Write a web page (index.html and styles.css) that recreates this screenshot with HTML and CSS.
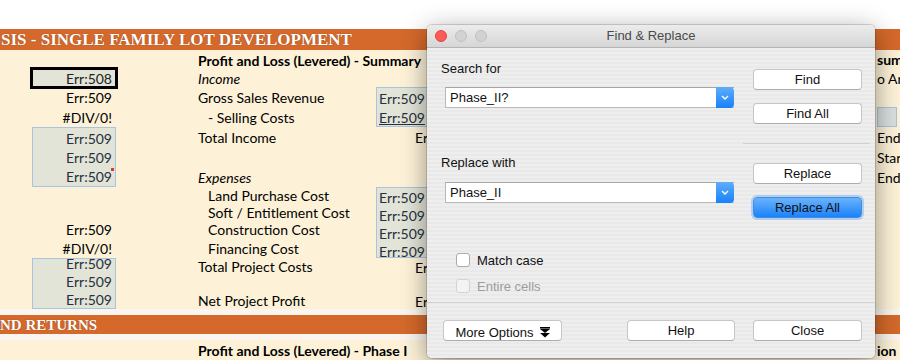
FILE: index.html
```html
<!DOCTYPE html>
<html lang="en">
<head>
    <meta charset="UTF-8">
    <title>Lot Development - Find &amp; Replace</title>
    <link rel="stylesheet" href="styles.css">
</head>
<body>
    <div class="sheet">
        <div class="band band-top"><span>SIS - SINGLE FAMILY LOT DEVELOPMENT</span></div>

        <div class="grid">
            <!-- column D: labels -->
            <div class="lbl bold" style="grid-row: 1">Profit and Loss (Levered) - Summary</div>
            <div class="lbl ital" style="grid-row: 2">Income</div>
            <div class="lbl" style="grid-row: 3">Gross Sales Revenue</div>
            <div class="lbl ind" style="grid-row: 4">- Selling Costs</div>
            <div class="lbl" style="grid-row: 5">Total Income</div>
            <div class="lbl ital" style="grid-row: 7">Expenses</div>
            <div class="lbl ind tight" style="grid-row: 8">Land Purchase Cost</div>
            <div class="lbl ind tight" style="grid-row: 9">Soft / Entitlement Cost</div>
            <div class="lbl ind tight" style="grid-row: 10">Construction Cost</div>
            <div class="lbl ind" style="grid-row: 11">Financing Cost</div>
            <div class="lbl tight" style="grid-row: 12">Total Project Costs</div>
            <div class="lbl tight" style="grid-row: 14">Net Project Profit</div>

            <!-- column B: values -->
            <div class="val selected" style="grid-row: 2">Err:508</div>
            <div class="val" style="grid-row: 3">Err:509</div>
            <div class="val" style="grid-row: 4">#DIV/0!</div>
            <div class="val box" style="grid-row: 5 / 8">
                <div>Err:509</div>
                <div>Err:509</div>
                <div class="has-note">Err:509<span class="note"></span></div>
            </div>
            <div class="val tight" style="grid-row: 10">Err:509</div>
            <div class="val" style="grid-row: 11">#DIV/0!</div>
            <div class="val box" style="grid-row: 12 / 15">
                <div>Err:509</div>
                <div>Err:509</div>
                <div>Err:509</div>
            </div>

            <!-- column E: values under the dialog -->
            <div class="rval box" style="grid-row: 3 / 5">
                <div>Err:509</div>
                <div><u>Err:509</u></div>
            </div>
            <div class="rval cut" style="grid-row: 5">Err:509</div>
            <div class="rval box" style="grid-row: 8 / 12">
                <div>Err:509</div>
                <div>Err:509</div>
                <div>Err:509</div>
                <div><u>Err:509</u></div>
            </div>
            <div class="rval cut" style="grid-row: 12">Err:509</div>
            <div class="rval cut" style="grid-row: 14">Err:509</div>

            <!-- column G: right edge -->
            <div class="far bold" style="grid-row: 1">sum</div>
            <div class="far" style="grid-row: 2">o Ar</div>
            <div class="far-box" style="grid-row: 4"></div>
            <div class="far" style="grid-row: 5">End I</div>
            <div class="far" style="grid-row: 6">Star</div>
            <div class="far" style="grid-row: 7">End</div>
        </div>

        <div class="stripe"></div>
        <div class="band band-mid"><span>ND RETURNS</span></div>
        <div class="stripe"></div>

        <div class="last-row">
            <div class="lbl bold">Profit and Loss (Levered) - Phase I</div>
            <div class="far bold">ion</div>
        </div>
    </div>

    <div class="dialog">
        <div class="titlebar">
            <div class="lights">
                <span class="light red"></span>
                <span class="light"></span>
                <span class="light"></span>
            </div>
            <div class="title">Find &amp; Replace</div>
        </div>

        <div class="dlg-body">
            <div class="section">
                <div class="fields">
                    <label>Search for</label>
                    <div class="combo">
                        <span class="combo-text">Phase_II?</span>
                        <span class="combo-btn"><svg width="8" height="5" viewBox="0 0 8 5"><polyline points="1,1 4,4 7,1" fill="none" stroke="#fff" stroke-width="1.4"/></svg></span>
                    </div>
                </div>
                <div class="buttons">
                    <div class="btn">Find</div>
                    <div class="btn">Find All</div>
                </div>
            </div>

            <div class="sep-right"></div>

            <div class="section second">
                <div class="fields">
                    <label>Replace with</label>
                    <div class="combo">
                        <span class="combo-text">Phase_II</span>
                        <span class="combo-btn"><svg width="8" height="5" viewBox="0 0 8 5"><polyline points="1,1 4,4 7,1" fill="none" stroke="#fff" stroke-width="1.4"/></svg></span>
                    </div>
                </div>
                <div class="buttons">
                    <div class="btn">Replace</div>
                    <div class="btn primary">Replace All</div>
                </div>
            </div>

            <div class="checks">
                <div class="check"><span class="box-ck"></span>Match case</div>
                <div class="check disabled"><span class="box-ck"></span>Entire cells</div>
            </div>

            <div class="footer">
                <div class="btn more">More Options <svg width="10" height="11" viewBox="0 0 10 11"><rect x="0" y="0" width="10" height="1.6" fill="#000"/><polygon points="0,2 10,2 5,6" fill="#000"/><polygon points="0,6 10,6 5,10.5" fill="#000"/></svg></div>
                <div class="btn help">Help</div>
                <div class="btn">Close</div>
            </div>
        </div>
    </div>
</body>
</html>
```

FILE: styles.css
```css
body {
    margin: 0;
    width: 900px;
    height: 360px;
    overflow: hidden;
    background: #fff;
    font-family: Lato, "Open Sans", sans-serif;
    position: relative;
}

/* spreadsheet behind the dialog */
.sheet {
    padding-top: 29px;
}
.band {
    background: #d4692b;
    color: #fff;
    font-family: "Liberation Serif", serif;
    font-weight: bold;
    font-size: 17px;
    white-space: nowrap;
    overflow: hidden;
    text-shadow: 0 0 1px #7a3410;
}
.band-top {
    height: 21px;
    line-height: 22px;
    padding-left: 1px;
}
.band-mid {
    height: 19px;
    line-height: 20px;
    font-size: 15px;
}
.stripe {
    height: 6px;
    background: #faf6ef;
}
.grid {
    display: grid;
    grid-template-columns: 32px 84px 82px 178px 51px 448px 25px;
    grid-template-rows: 19px 18px 20px 20px 20px 20px 20px 17px 17px 17px 20px 17px 17px 17px;
    background: #fdf2d8;
    font-size: 14px;
    color: #000;
}
.lbl {
    grid-column: 4;
    display: flex;
    align-items: center;
    white-space: nowrap;
    padding-top: 1px;
}
.tight {
    padding-top: 0;
    padding-bottom: 1px;
}
.bold {
    font-weight: bold;
}
.ital {
    font-style: italic;
}
.ind {
    padding-left: 10px;
}
.val {
    grid-column: 2;
    display: flex;
    align-items: center;
    justify-content: flex-end;
    padding-right: 4px;
    padding-top: 1px;
}
.val.tight {
    padding-top: 0;
}
.val.selected {
    background: #e2e4d7;
    outline: 3px solid #000;
    outline-offset: -1px;
    color: #222;
}
.box {
    background: #e2e4d7;
    border: 1px solid #a8c4de;
    color: #263040;
    display: flex;
    flex-direction: column;
    align-items: stretch;
    padding: 0;
}
.box > div {
    flex: 1;
    display: flex;
    align-items: center;
    padding-top: 1px;
}
.val.box > div {
    justify-content: flex-end;
    padding-right: 3px;
}
.has-note {
    position: relative;
}
.note {
    position: absolute;
    right: 1px;
    top: 1px;
    width: 3px;
    height: 3px;
    background: #e8352c;
}
.rval {
    grid-column: 5 / 7;
    white-space: nowrap;
    overflow: hidden;
}
.rval.box > div {
    padding-left: 2px;
}
.rval.cut {
    display: flex;
    align-items: center;
    padding-left: 39px;
    padding-top: 1px;
}
.far {
    grid-column: 7;
    display: flex;
    align-items: center;
    padding-left: 2px;
    white-space: nowrap;
    overflow: hidden;
}
.far-box {
    grid-column: 7;
    margin-left: 2px;
    margin-right: 3px;
    background: #d9dede;
    border: 1px solid #a8c4de;
}
.last-row {
    display: grid;
    grid-template-columns: 198px 677px 25px;
    height: 20px;
    background: #fdf2d8;
    font-size: 14px;
}
.last-row .lbl {
    grid-column: 2;
}
.last-row .far {
    grid-column: 3;
}

/* the find & replace window */
.dialog {
    position: absolute;
    left: 427px;
    top: 25px;
    width: 448px;
    border-radius: 5px;
    overflow: hidden;
    box-shadow: 0 0 0 1px rgba(0, 0, 0, 0.14), 0 6px 26px rgba(0, 0, 0, 0.42);
    font-family: "Liberation Sans", Arial, sans-serif;
    font-size: 13px;
    color: #111;
}
.titlebar {
    height: 22px;
    background: linear-gradient(#ececec, #d6d6d6);
    border-bottom: 1px solid #b4b4b4;
    display: flex;
    align-items: center;
    position: relative;
}
.lights {
    display: flex;
    gap: 8px;
    padding-left: 8px;
}
.light {
    width: 12px;
    height: 12px;
    border-radius: 50%;
    box-sizing: border-box;
    background: #d2d2d2;
    border: 1px solid #c0c0c0;
}
.light.red {
    background: #fc5b57;
    border-color: #e3443f;
}
.title {
    position: absolute;
    left: 0;
    right: 0;
    text-align: center;
    color: #4a4a4a;
    line-height: 22px;
}
.dlg-body {
    height: 310px;
    box-sizing: border-box;
    padding-top: 13px;
    background: repeating-linear-gradient(#eeeeee 0, #eeeeee 2px, #e9e9e9 2px, #e9e9e9 4px);
}
.section {
    display: flex;
    justify-content: space-between;
    padding-right: 13px;
}
.section.second {
    padding-top: 11px;
}
.fields {
    padding-left: 14px;
}
.fields label {
    display: block;
    line-height: 16px;
}
.combo {
    margin: 10px 0 0 4px;
    width: 289px;
    height: 21px;
    box-sizing: border-box;
    background: #fff;
    border: 1px solid #b9b9b9;
    border-top-color: #a6a6a6;
    border-right: none;
    display: flex;
    align-items: center;
}
.second .combo {
    margin-top: 11px;
}
.combo-text {
    flex: 1;
    padding-left: 4px;
    font-size: 13px;
}
.combo-btn {
    width: 18px;
    height: 21px;
    margin-top: -1px;
    margin-bottom: -1px;
    border-radius: 0 4px 4px 0;
    background: linear-gradient(#5fadfb, #1681fb);
    display: flex;
    align-items: center;
    justify-content: center;
}
.buttons {
    padding-top: 8px;
    display: flex;
    flex-direction: column;
    gap: 13px;
}
.btn {
    width: 109px;
    height: 21px;
    box-sizing: border-box;
    background: #fff;
    border: 1px solid #c6c6c6;
    border-bottom-color: #adadad;
    border-radius: 4px;
    display: flex;
    align-items: center;
    justify-content: center;
    gap: 6px;
}
.btn.primary {
    background: linear-gradient(#6ab3fb, #1b82fb);
    border-color: #3f8fe6;
    box-shadow: 0 0 0 2px rgba(110, 170, 240, 0.45);
}
.sep-right {
    margin: 19px 5px 0 316px;
    height: 1px;
    background: #d0d0d0;
}
.checks {
    padding: 35px 0 0 29px;
    display: flex;
    flex-direction: column;
    gap: 12px;
}
.check {
    display: flex;
    align-items: center;
    gap: 7px;
    height: 14px;
}
.box-ck {
    width: 14px;
    height: 14px;
    box-sizing: border-box;
    border: 1px solid #acacac;
    border-radius: 3px;
    background: #fff;
}
.check.disabled {
    color: #9c9c9c;
}
.check.disabled .box-ck {
    background: #f3f3f3;
    border-color: #d3d3d3;
}
.footer {
    margin-top: 9px;
    border-top: 1px solid #d2d2d2;
    padding: 17px 13px 0 16px;
    display: flex;
}
.btn.more {
    width: 119px;
    padding-top: 3px;
}
.btn.more svg {
    margin-top: 1px;
}
.btn.help {
    width: 108px;
    margin-left: 65px;
    margin-right: 18px;
}
```
